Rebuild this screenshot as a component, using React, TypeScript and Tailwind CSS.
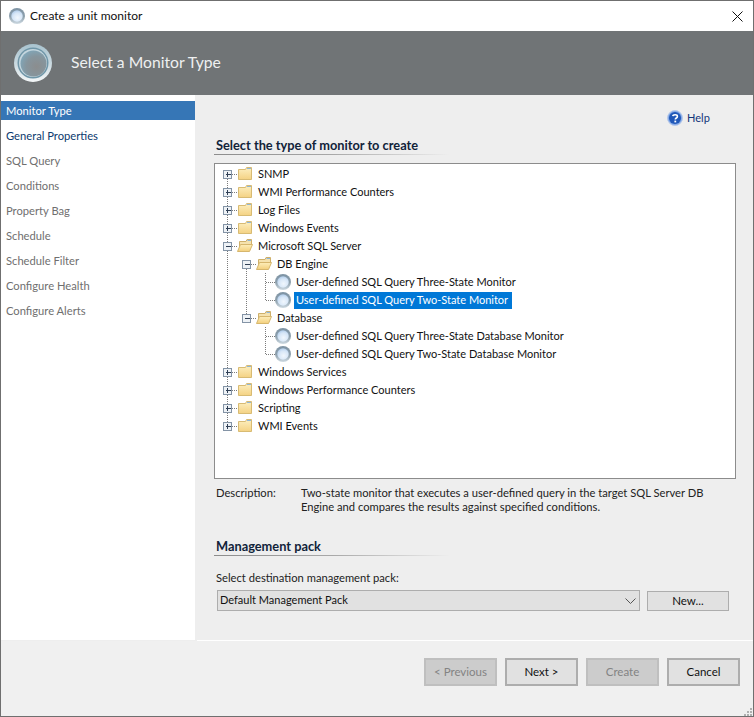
const font = "[font-family:Lato,sans-serif]";

type Cell = {
  w: number;
  up?: boolean;
  down?: boolean;
  right?: boolean;
  box?: "plus" | "minus";
};

function Guide({ w, up, down, right, box }: Cell) {
  const cx = w === 18 ? 8.5 : 9.5;
  return (
    <svg width={w} height={18} className="shrink-0" shapeRendering="crispEdges">
      <g stroke="#7c7c7c" strokeDasharray="1 1" fill="none">
        {up && <line x1={cx} y1={0} x2={cx} y2={10} />}
        {down && <line x1={cx} y1={10} x2={cx} y2={18} />}
        {right && <line x1={cx} y1={9.5} x2={w} y2={9.5} />}
      </g>
      {box && (
        <g>
          <rect x={cx - 4} y={5.5} width={8} height={8} fill="#eef2f6" stroke="#8494a6" />
          <line x1={cx - 2} y1={9.5} x2={cx + 3} y2={9.5} stroke="#2f3f55" />
          {box === "plus" && <line x1={cx} y1={7} x2={cx} y2={12} stroke="#2f3f55" />}
        </g>
      )}
    </svg>
  );
}

function FolderClosed() {
  return (
    <svg width={16} height={18} viewBox="0 0 16 18" className="shrink-0">
      <defs>
        <linearGradient id="folder-body" x1="0" y1="0" x2="0" y2="1">
          <stop offset="0" stopColor="#fdf0c2" />
          <stop offset="1" stopColor="#f4d283" />
        </linearGradient>
      </defs>
      <path d="M1.5 4.5 L8.5 4.5 L9.5 2.5 L14.5 2.5 L14.5 14.5 L1.5 14.5 Z" fill="url(#folder-body)" stroke="#d8bb73" />
      <rect x="10" y="3" width="4" height="1" fill="#8fb6d8" />
    </svg>
  );
}

function FolderOpen() {
  return (
    <svg width={16} height={18} viewBox="0 0 16 18" className="shrink-0">
      <defs>
        <linearGradient id="folder-front" x1="0" y1="0" x2="0" y2="1">
          <stop offset="0" stopColor="#fdeebb" />
          <stop offset="1" stopColor="#f3cf7c" />
        </linearGradient>
      </defs>
      <path d="M2.5 13.5 L2.5 4.5 L9 4.5 L10 2.5 L14.5 2.5 L14.5 7.5" fill="#f5e2ae" stroke="#cfb06a" />
      <rect x="10.5" y="3" width="3.5" height="1" fill="#8fb6d8" />
      <path d="M0.5 14.5 L3.5 7.5 L15.5 7.5 L12.5 14.5 Z" fill="url(#folder-front)" stroke="#d6b66d" />
    </svg>
  );
}

function Orb({ size, id }: { size: number; id: string }) {
  return (
    <svg width={size} height={size} viewBox="0 0 32 32" className="shrink-0">
      <defs>
        <linearGradient id={`${id}-ring`} x1="0" y1="0" x2="0" y2="1">
          <stop offset="0" stopColor="#7d93a4" />
          <stop offset="0.55" stopColor="#8ea0ac" />
          <stop offset="1" stopColor="#cfdbe3" />
        </linearGradient>
        <radialGradient id={`${id}-core`} cx="0.55" cy="0.65" r="0.7">
          <stop offset="0" stopColor="#f1f7fd" />
          <stop offset="0.6" stopColor="#d6e6f7" />
          <stop offset="1" stopColor="#a9c7e8" />
        </radialGradient>
      </defs>
      <circle cx="16" cy="16" r="16" fill={`url(#${id}-ring)`} />
      <circle cx="16" cy="16" r="11.5" fill={`url(#${id}-core)`} />
    </svg>
  );
}

function BannerOrb() {
  return (
    <svg width={38} height={38} viewBox="0 0 38 38" className="shrink-0">
      <defs>
        <linearGradient id="banner-ring" x1="0" y1="0" x2="0" y2="1">
          <stop offset="0" stopColor="#a8c3cf" />
          <stop offset="0.5" stopColor="#c8d8df" />
          <stop offset="1" stopColor="#f4f7f8" />
        </linearGradient>
        <radialGradient id="banner-core" cx="0.62" cy="0.62" r="0.72">
          <stop offset="0" stopColor="#8b8d8e" />
          <stop offset="0.55" stopColor="#86959d" />
          <stop offset="1" stopColor="#7fa9bd" />
        </radialGradient>
      </defs>
      <circle cx="19" cy="19" r="19" fill="url(#banner-ring)" />
      <circle cx="19" cy="19" r="15.5" fill="#6f96a8" />
      <circle cx="19" cy="19" r="14" fill="#c4d6de" />
      <circle cx="19.5" cy="19.5" r="13" fill="url(#banner-core)" />
    </svg>
  );
}

function HelpIcon() {
  return (
    <svg width={16} height={16} viewBox="0 0 16 16" className="shrink-0">
      <circle cx="8" cy="8" r="7.5" fill="#7fa6e6" stroke="#b7c9ea" />
      <circle cx="8" cy="8" r="6" fill="#1f57b8" />
      <path d="M5.8 6.2 C6 4.4 10.4 4.2 10.4 6.4 C10.4 8 8.3 8 8.3 9.6" fill="none" stroke="#ffffff" strokeWidth="1.6" />
      <rect x="7.4" y="10.6" width="1.8" height="1.8" fill="#ffffff" />
    </svg>
  );
}

function Row({ cells, icon, label, selected }: { cells: Cell[]; icon: React.ReactNode; label: string; selected?: boolean }) {
  return (
    <div className="flex h-[18px] items-center">
      {cells.map((c, i) => (
        <Guide key={i} {...c} />
      ))}
      {icon}
      <span
        className={`ml-[3px] px-[2px] h-[17px] leading-[16px] whitespace-nowrap ${selected ? "bg-[#0078d7] text-white pr-[4px]" : "text-[#111111]"}`}
      >
        {label}
      </span>
    </div>
  );
}

function Heading({ children }: { children: string }) {
  return (
    <div>
      <div className="h-[17px] pl-[2px] text-[12.8px] leading-[17px] font-bold text-[#11233a]">{children}</div>
      <div className="h-[1px] w-[236px] bg-gradient-to-r from-[#8c8c8c] via-[#a8a8a8] to-transparent" />
    </div>
  );
}

function WizardButton({ label, disabled }: { label: string; disabled?: boolean }) {
  return (
    <button
      className={`h-[28px] w-[73px] shrink-0 border-2 text-[11.5px] ${
        disabled ? "border-[#bfbfbf] bg-[#cccccc] text-[#838383]" : "border-[#adadad] bg-[#e1e1e1] text-[#111111]"
      }`}
    >
      {label}
    </button>
  );
}

const steps = [
  "Monitor Type",
  "General Properties",
  "SQL Query",
  "Conditions",
  "Property Bag",
  "Schedule",
  "Schedule Filter",
  "Configure Health",
  "Configure Alerts",
];

const top = (label: string, first = false, last = false) => (
  <Row
    cells={[{ w: 18, up: !first, down: !last, right: true, box: "plus" }]}
    icon={<FolderClosed />}
    label={label}
  />
);

export default function App() {
  return (
    <div className={`flex h-[717px] w-[754px] flex-col border border-[#6f6f6f] bg-white text-[11px] ${font}`}>
      {/* title bar */}
      <div className="flex h-[30px] shrink-0 items-center pl-[8px] pr-[10px]">
        <Orb size={16} id="title" />
        <span className="ml-[5px] text-[12px] text-[#111111]">Create a unit monitor</span>
        <svg width={11} height={11} viewBox="0 0 11 11" className="ml-auto">
          <path d="M0.5 0.5 L10.5 10.5 M10.5 0.5 L0.5 10.5" stroke="#111111" strokeWidth="1" />
        </svg>
      </div>

      {/* banner */}
      <div className="flex h-[64px] shrink-0 items-center bg-[#707476] pl-[13px]">
        <BannerOrb />
        <span className="ml-[19px] text-[15.7px] text-[#eef0f1]">Select a Monitor Type</span>
      </div>

      {/* body */}
      <div className="flex h-[545px] shrink-0">
        <div className="w-[194px] shrink-0 bg-white pt-[6px] text-[11.2px]">
          {steps.map((s, i) => (
            <div
              key={s}
              className={`flex h-[19px] items-center pl-[5px] pt-[2px] ${i > 0 ? "mt-[6px]" : ""} ${
                i === 0 ? "bg-[#3676b6] text-white" : i === 1 ? "text-[#0d3a6e]" : "text-[#6f6f6f]"
              }`}
            >
              {s}
            </div>
          ))}
        </div>

        <div className="flex flex-1 flex-col bg-[#eeeeee] pl-[19px] pr-[17px] pt-[15px]">
          <div className="flex h-[16px] items-center pl-[453px]">
            <HelpIcon />
            <span className="ml-[4px] text-[#12357a]">Help</span>
          </div>

          <div className="mt-[11px]">
            <Heading>Select the type of monitor to create</Heading>
          </div>

          <div className="mt-[8px] h-[316px] border border-[#8c8c8c] bg-white pl-[4px] pt-[1px]">
            {top("SNMP", true)}
            {top("WMI Performance Counters")}
            {top("Log Files")}
            {top("Windows Events")}
            <Row
              cells={[{ w: 18, up: true, down: true, right: true, box: "minus" }]}
              icon={<FolderOpen />}
              label="Microsoft SQL Server"
            />
            <Row
              cells={[{ w: 18, up: true, down: true }, { w: 19, down: true, right: true, box: "minus" }]}
              icon={<FolderOpen />}
              label="DB Engine"
            />
            <Row
              cells={[{ w: 18, up: true, down: true }, { w: 19, up: true, down: true }, { w: 19, up: true, down: true, right: true }]}
              icon={<Orb size={16} id="n1" />}
              label="User-defined SQL Query Three-State Monitor"
            />
            <Row
              cells={[{ w: 18, up: true, down: true }, { w: 19, up: true, down: true }, { w: 19, up: true, right: true }]}
              icon={<Orb size={16} id="n2" />}
              label="User-defined SQL Query Two-State Monitor"
              selected
            />
            <Row
              cells={[{ w: 18, up: true, down: true }, { w: 19, up: true, right: true, box: "minus" }]}
              icon={<FolderOpen />}
              label="Database"
            />
            <Row
              cells={[{ w: 18, up: true, down: true }, { w: 19 }, { w: 19, up: true, down: true, right: true }]}
              icon={<Orb size={16} id="n3" />}
              label="User-defined SQL Query Three-State Database Monitor"
            />
            <Row
              cells={[{ w: 18, up: true, down: true }, { w: 19 }, { w: 19, up: true, right: true }]}
              icon={<Orb size={16} id="n4" />}
              label="User-defined SQL Query Two-State Database Monitor"
            />
            {top("Windows Services")}
            {top("Windows Performance Counters")}
            {top("Scripting")}
            {top("WMI Events", false, true)}
          </div>

          <div className="mt-[7px] flex pl-[2px] text-[11.2px] leading-[14px] text-[#222222]">
            <div className="w-[85px] shrink-0">Description:</div>
            <div className="whitespace-nowrap">
              Two-state monitor that executes a user-defined query in the target SQL Server DB
              <br />
              Engine and compares the results against specified conditions.
            </div>
          </div>

          <div className="mt-[24px]">
            <Heading>Management pack</Heading>
          </div>

          <div className="mt-[15px] h-[14px] pl-[2px] text-[11.2px] leading-[14px] text-[#222222]">Select destination management pack:</div>

          <div className="mt-[5px] flex items-start pl-[3px]">
            <div className="flex h-[21px] w-[423px] items-center border border-[#adadad] bg-[#e1e1e1] pl-[2px] pr-[2px] text-[#111111]">
              Default Management Pack
              <svg width={11} height={6} viewBox="0 0 11 6" className="ml-auto mr-[1px]">
                <path d="M0.5 0.5 L5.5 5.5 L10.5 0.5" fill="none" stroke="#555555" />
              </svg>
            </div>
            <button className="ml-[7px] mt-[1px] h-[20px] w-[82px] border border-[#adadad] bg-[#e1e1e1] text-[11.5px] text-[#111111]">
              New...
            </button>
          </div>
        </div>
      </div>

      {/* footer */}
      <div className="flex h-[1px] shrink-0 bg-[#eeeeee]">
        <div className="ml-[196px] flex-1 bg-white" />
      </div>
      <div className="relative flex flex-1 items-start gap-[8px] bg-[#f0f0f0] pl-[423px] pt-[17px]">
        <WizardButton label="< Previous" disabled />
        <WizardButton label="Next >" />
        <WizardButton label="Create" disabled />
        <WizardButton label="Cancel" />
        <svg width={8} height={8} viewBox="0 0 8 8" className="absolute bottom-0 right-[1px]" shapeRendering="crispEdges">
          <g fill="#b0b0b0">
            <rect x="6" y="0" width="2" height="2" />
            <rect x="3" y="3" width="2" height="2" />
            <rect x="6" y="3" width="2" height="2" />
            <rect x="0" y="6" width="2" height="2" />
            <rect x="3" y="6" width="2" height="2" />
            <rect x="6" y="6" width="2" height="2" />
          </g>
        </svg>
      </div>
    </div>
  );
}
